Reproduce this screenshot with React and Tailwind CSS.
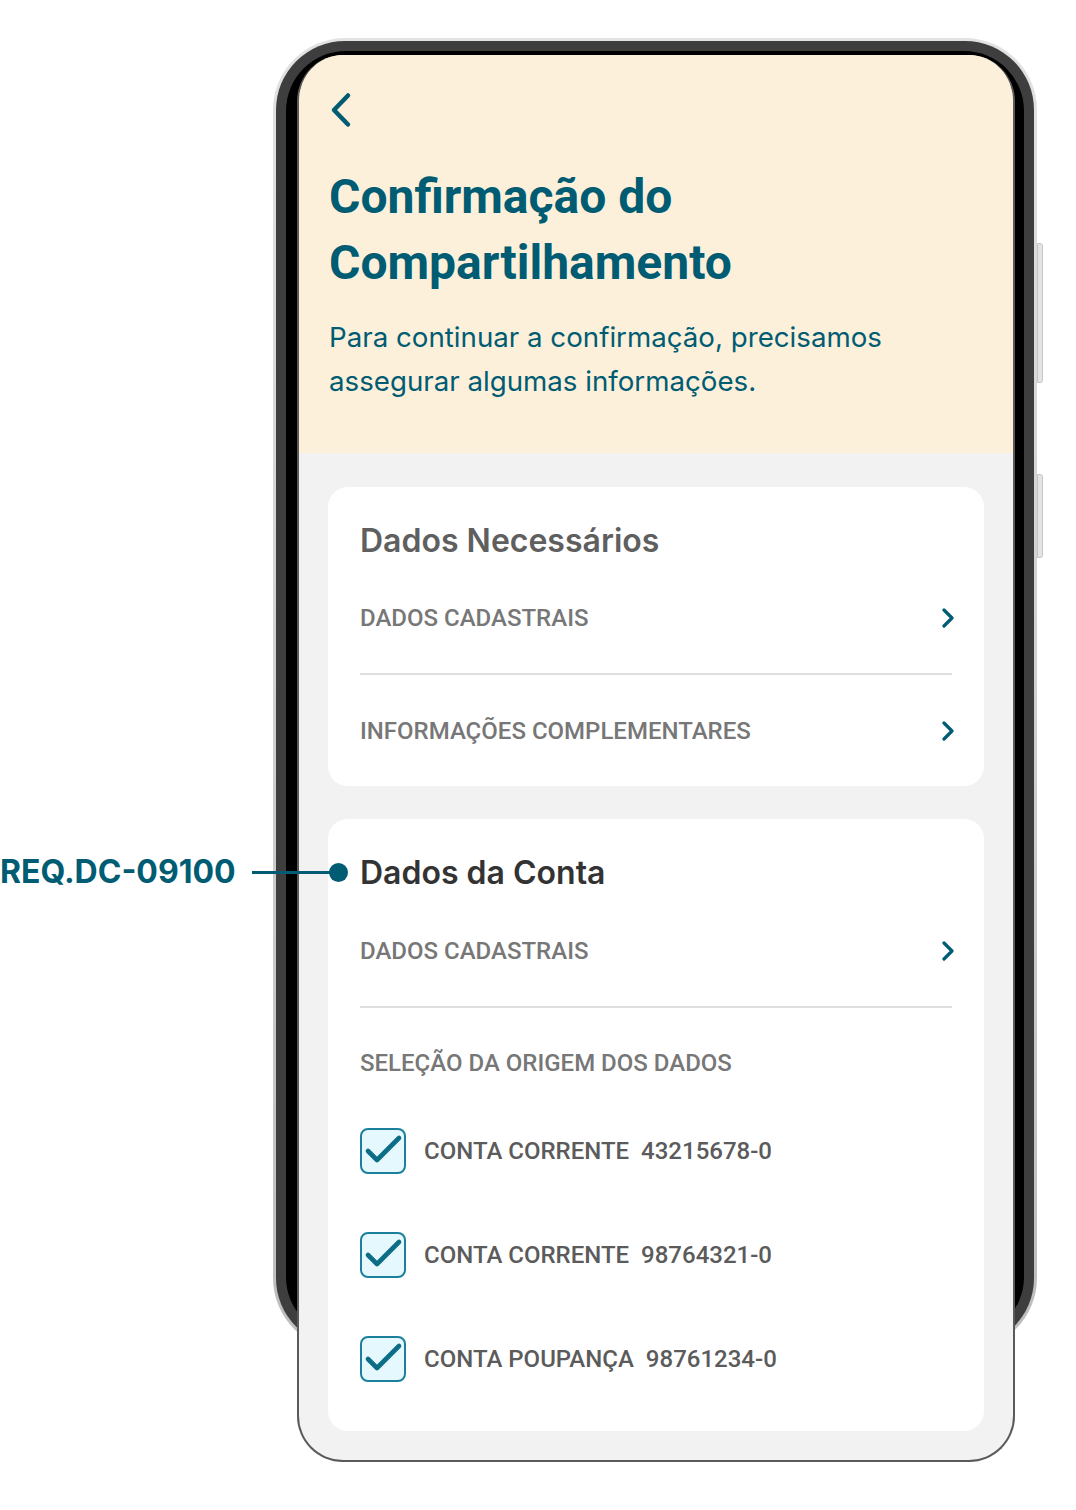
import React from 'react'

const teal = 'text-[#005c73]'

function Chevron() {
  return (
    <svg width="14" height="22" viewBox="0 0 14 22" fill="none" className="mr-[-2px]">
      <path d="M4 3 L12 11 L4 19" stroke="#005c73" strokeWidth="3.2" strokeLinecap="round" strokeLinejoin="round" />
    </svg>
  )
}

function LinkRow({ label, divider }) {
  return (
    <div className={`flex items-center justify-between ${divider ? 'h-[113px] border-b-2 border-[#dedede]' : 'h-[111px]'}`}>
      <span className="font-['Roboto'] font-medium text-[24px] text-[#777777]">{label}</span>
      <Chevron />
    </div>
  )
}

function CheckRow({ label, number }) {
  return (
    <div className="flex items-center h-[46px]">
      <div className="w-[46px] h-[46px] rounded-[8px] border-2 border-[#1b809b] bg-[#e4f8fd] flex items-center justify-center">
        <svg width="42" height="42" viewBox="0 0 42 42" fill="none">
          <path d="M6 21 L15 30 L37 8" stroke="#0c6e86" strokeWidth="4.6" strokeLinecap="round" strokeLinejoin="round" />
        </svg>
      </div>
      <span className="ml-[18px] font-['Roboto'] font-medium text-[24px] text-[#5b5b5b] whitespace-pre">
        {label}  {number}
      </span>
    </div>
  )
}

function PhoneFrame() {
  return (
    <div className="absolute left-[273px] top-[38px] w-[764px] h-[1312px] rounded-[72px] bg-gradient-to-b from-[#e2e2e2] to-[#bdbdbd] p-[3px]">
      <div className="w-full h-full rounded-[69px] bg-[#3e3e3e] pt-[10px] px-[10px] pb-[10px]">
        <div className="w-full h-full rounded-[60px] bg-black" />
      </div>
      <div className="absolute right-[-6px] top-[205px] w-[6px] h-[140px] rounded-r-[3px] bg-[#e4e4e4] border border-[#c4c4c4]" />
      <div className="absolute right-[-6px] top-[436px] w-[6px] h-[84px] rounded-r-[3px] bg-[#e4e4e4] border border-[#c4c4c4]" />
    </div>
  )
}

export default function App() {
  return (
    <div className="relative w-[1076px] h-[1510px] bg-white overflow-hidden">
      <PhoneFrame />

      <div className="relative ml-[297px] pt-[55px] w-[718px]">
        <div className="rounded-t-[46px] rounded-b-[46px] overflow-hidden border-x-2 border-b-2 border-[#5a5a5a] bg-[#f2f2f2]">
          <div className="bg-[#fcf0da] pt-[37px] pb-[50px] px-[30px]">
            <svg width="22" height="36" viewBox="0 0 22 36" fill="none" className="ml-[1px]">
              <path d="M18 3.5 L4 18 L18 32.5" stroke="#005c73" strokeWidth="4.5" strokeLinecap="round" strokeLinejoin="round" />
            </svg>
            <h1 className={`mt-[36px] font-['Roboto'] font-bold text-[48px] leading-[66px] ${teal}`}>
              Confirmação do
              <br />
              Compartilhamento
            </h1>
            <p className={`mt-[19px] font-['Inter'] text-[27.7px] leading-[44px] ${teal}`}>
              Para continuar a confirmação, precisamos
              <br />
              assegurar algumas informações.
            </p>
          </div>

          <div className="px-[29px] pt-[34px] pb-[29px] flex flex-col gap-[33px]">
            <div className="bg-white rounded-[20px] px-[32px] pt-[38px]">
              <h2 className="font-['Inter'] font-semibold text-[32px] leading-[32px] text-[#5f5f5f]">Dados Necessários</h2>
              <div className="mt-[5px]">
                <LinkRow label="DADOS CADASTRAIS" divider />
                <LinkRow label="INFORMAÇÕES COMPLEMENTARES" />
              </div>
            </div>

            <div className="relative bg-white rounded-[20px] px-[32px] pt-[38px] pb-[49px]">
              <h2 className="font-['Inter'] font-semibold text-[32px] leading-[32px] text-[#333333]">Dados da Conta</h2>
              <div className="mt-[6px]">
                <LinkRow label="DADOS CADASTRAIS" divider />
                <div className="h-[110px] flex items-center">
                  <span className="font-['Roboto'] font-medium text-[24px] text-[#777777]">SELEÇÃO DA ORIGEM DOS DADOS</span>
                </div>
              </div>
              <div className="mt-[10px] flex flex-col gap-[58px]">
                <CheckRow label="CONTA CORRENTE" number="43215678-0" />
                <CheckRow label="CONTA CORRENTE" number="98764321-0" />
                <CheckRow label="CONTA POUPANÇA" number="98761234-0" />
              </div>
            </div>
          </div>
        </div>
      </div>

      <div className="absolute left-0 top-[852px] h-[40px] flex items-center">
        <span className={`font-['Inter'] font-bold text-[32px] ${teal}`}>REQ.DC-09100</span>
        <div className="ml-[16px] w-[78px] h-[3px] bg-[#005c73]" />
        <div className="w-[19px] h-[19px] rounded-full bg-[#005c73] -ml-[1px]" />
      </div>
    </div>
  )
}
